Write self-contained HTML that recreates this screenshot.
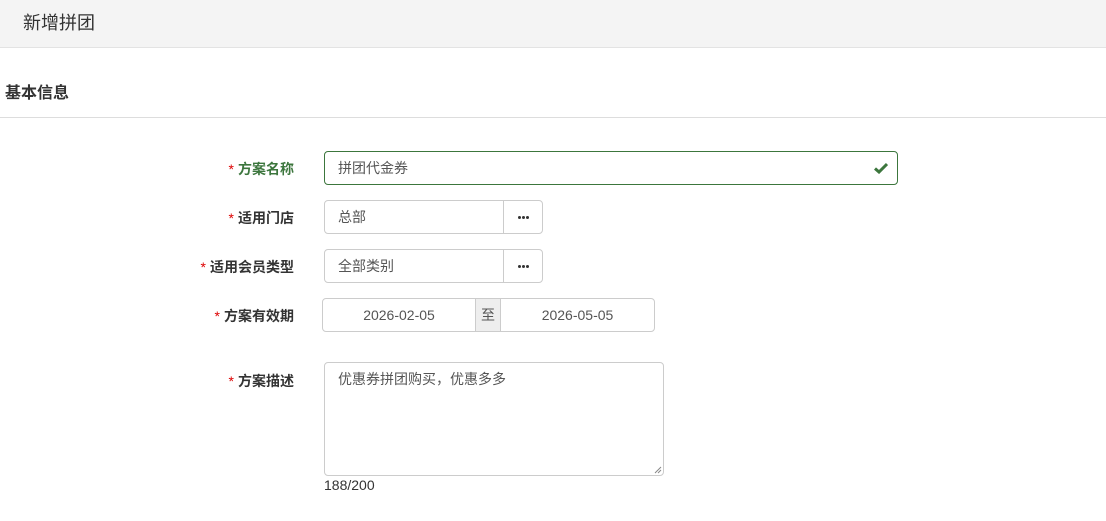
<!DOCTYPE html>
<html><head><meta charset="utf-8"><style>
body{margin:0;width:1106px;height:521px;background:#fff;font-family:"Liberation Sans","Noto Sans CJK SC",sans-serif;color:#333;position:relative;overflow:hidden}
.hdr{position:absolute;left:0;top:0;width:1106px;height:47px;background:#f4f4f4;border-bottom:1px solid #e3e3e3}
.hdr span{position:absolute;left:23px;top:9px;font-size:18px;color:#333}
.sec{position:absolute;left:5px;top:79px;font-size:16px;font-weight:bold}
.line{position:absolute;left:0;top:117px;width:1106px;height:1px;background:#ddd}
.lbl{position:absolute;right:812px;font-size:14px;font-weight:bold;color:#333;white-space:nowrap}
.lbl i{font-style:normal;color:#d00;font-weight:normal;margin-right:4px}
.box{position:absolute;box-sizing:border-box;border:1px solid #ccc;font-size:14px;color:#555;padding-left:13px;line-height:32px;height:34px}
.btn{position:absolute;box-sizing:border-box;border:1px solid #ccc;height:34px;border-radius:0 4px 4px 0}
.btn b{position:absolute;top:15px;width:3px;height:3px;border-radius:50%;background:#333}
</style></head><body>
<div class="hdr"><span>新增拼团</span></div>
<div class="sec">基本信息</div>
<div class="line"></div>

<div class="lbl" style="top:159px;color:#3c763d"><i>*</i>方案名称</div>
<div class="box" style="left:324px;top:151px;width:574px;border-color:#3c763d;border-radius:4px">拼团代金券
<svg style="position:absolute;right:9px;top:10px" width="14" height="12" viewBox="0 0 14 12"><path d="M1 6.5 L5 10 L13 2" stroke="#3c763d" stroke-width="3" fill="none"/></svg></div>

<div class="lbl" style="top:208px"><i>*</i>适用门店</div>
<div class="box" style="left:324px;top:200px;width:180px;border-radius:4px 0 0 4px">总部</div>
<div class="btn" style="left:503px;top:200px;width:40px"><b style="left:14px"></b><b style="left:18px"></b><b style="left:22px"></b></div>

<div class="lbl" style="top:257px"><i>*</i>适用会员类型</div>
<div class="box" style="left:324px;top:249px;width:180px;border-radius:4px 0 0 4px">全部类别</div>
<div class="btn" style="left:503px;top:249px;width:40px"><b style="left:14px"></b><b style="left:18px"></b><b style="left:22px"></b></div>

<div class="lbl" style="top:306px"><i>*</i>方案有效期</div>
<div class="box" style="left:322px;top:298px;width:154px;border-radius:4px 0 0 4px;padding:0;text-align:center">2026-02-05</div>
<div class="box" style="left:475px;top:298px;width:26px;padding:0;text-align:center;background:#eee;font-size:14px">至</div>
<div class="box" style="left:500px;top:298px;width:155px;border-radius:0 4px 4px 0;padding:0;text-align:center">2026-05-05</div>

<div class="lbl" style="top:371px"><i>*</i>方案描述</div>
<div class="box" style="left:324px;top:362px;width:340px;height:114px;border-radius:4px;line-height:20px;padding-top:6px">优惠券拼团购买，优惠多多
<svg style="position:absolute;right:1px;bottom:1px" width="8" height="8"><path d="M7 1L1 7M7 4L4 7" stroke="#888"/></svg></div>
<div style="position:absolute;left:324px;top:477px;font-size:14px;color:#333">188/200</div>
</body></html>
